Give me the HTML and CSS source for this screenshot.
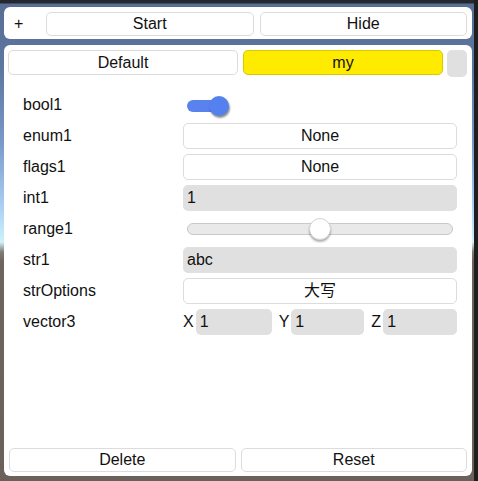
FILE: index.html
```html
<!DOCTYPE html>
<html>
<head>
<meta charset="utf-8">
<link rel="stylesheet" href="styles.css">
</head>
<body>
<div class="screen">
  <div class="topbar">
    <div class="plus">+</div>
    <div class="btn grow">Start</div>
    <div class="btn grow">Hide</div>
  </div>
  <div class="panel">
    <div class="tabs">
      <div class="btn tab-default">Default</div>
      <div class="btn tab-my">my</div>
      <div class="tab-extra"></div>
    </div>
    <div class="fields">
      <div class="label">bool1</div>
      <div class="ctrl"><div class="toggle"><div class="toggle-knob"></div></div></div>

      <div class="label">enum1</div>
      <div class="btn">None</div>

      <div class="label">flags1</div>
      <div class="btn">None</div>

      <div class="label">int1</div>
      <div class="input">1</div>

      <div class="label">range1</div>
      <div class="ctrl"><div class="slider"><div class="slider-knob"></div></div></div>

      <div class="label">str1</div>
      <div class="input">abc</div>

      <div class="label">strOptions</div>
      <div class="btn">大写</div>

      <div class="label">vector3</div>
      <div class="vector">
        <div class="axis"><span class="axis-name">X</span><div class="input">1</div></div>
        <div class="axis"><span class="axis-name">Y</span><div class="input">1</div></div>
        <div class="axis"><span class="axis-name">Z</span><div class="input">1</div></div>
      </div>
    </div>
    <div class="spacer"></div>
    <div class="bottom">
      <div class="btn grow">Delete</div>
      <div class="btn grow">Reset</div>
    </div>
  </div>
</div>
</body>
</html>
```

FILE: styles.css
```css
html, body {
  margin: 0;
  padding: 0;
}
body {
  width: 478px;
  height: 481px;
  overflow: hidden;
  font-family: "Liberation Sans", Arial, "Noto Sans CJK SC", sans-serif;
  font-size: 16px;
  color: #111;
  background:
    linear-gradient(to right, transparent 474px, #1f1f1f 474px),
    linear-gradient(to bottom,
      #25292f 0, #25292f 3px,
      #586e95 4px, #5d77a0 70px, #7898c8 140px, #a4caf0 200px,
      #c6ecfb 236px, #d2f2f8 242px, #7f7c76 252px, #6c645d 262px, #6a615a 100%);
}
.screen {
  box-sizing: border-box;
  width: 474px;
  height: 481px;
  padding: 7px 2px 5px 4px;
  display: flex;
  flex-direction: column;
  gap: 6px;
}
.topbar {
  background: #fff;
  border-radius: 6px;
  height: 32px;
  box-sizing: border-box;
  padding: 5px 5px 3px 5px;
  display: flex;
  gap: 6px;
}
.plus {
  width: 33px;
  padding-left: 5px;
  box-sizing: border-box;
  line-height: 24px;
  margin-right: -2px;
}
.btn {
  box-sizing: border-box;
  background: #fff;
  border: 1px solid #dcdcdc;
  border-radius: 5px;
  text-align: center;
  line-height: 22px;
  height: 24px;
  white-space: nowrap;
}
.grow { flex: 1; }
.panel {
  flex: 1;
  background: #fff;
  border-radius: 6px;
  display: flex;
  flex-direction: column;
  padding: 5px 5px 4px 4px;
  box-sizing: border-box;
}
.tabs {
  display: flex;
  gap: 5px;
  align-items: flex-start;
}
.tabs .btn {
  height: 25px;
  line-height: 23px;
}
.tab-default { width: 230px; }
.tab-my {
  flex: 1;
  background: #ffeb00;
  border-color: #d8c800;
}
.tab-extra {
  width: 20px;
  height: 27px;
  background: #e0e0e0;
  border-radius: 5px;
  margin-left: -1px;
}
.fields {
  display: grid;
  grid-template-columns: 160px 1fr;
  grid-auto-rows: 26px;
  row-gap: 5px;
  padding: 15px 10px 0 15px;
  align-items: center;
}
.fields .btn {
  height: 26px;
  line-height: 24px;
}
.label {
  line-height: 26px;
}
.input {
  box-sizing: border-box;
  background: #e0e0e0;
  border-radius: 5px;
  height: 26px;
  line-height: 26px;
  padding-left: 4px;
}
.ctrl {
  height: 26px;
  position: relative;
}
.toggle {
  position: absolute;
  left: 4px;
  top: 8px;
  width: 38px;
  height: 12px;
  border-radius: 6px;
  background: #5a82ef;
}
.toggle-knob {
  position: absolute;
  right: -4px;
  top: -4px;
  width: 20px;
  height: 20px;
  border-radius: 50%;
  background: #5580f0;
  box-shadow: 1px 2px 2px rgba(0, 0, 0, 0.45);
}
.slider {
  position: absolute;
  left: 4px;
  right: 4px;
  top: 7px;
  height: 12px;
  box-sizing: border-box;
  border: 1px solid #c9c9c9;
  border-radius: 6px;
  background: #e9e9e9;
}
.slider-knob {
  position: absolute;
  left: 121px;
  top: -6px;
  width: 22px;
  height: 22px;
  box-sizing: border-box;
  border-radius: 50%;
  background: #fff;
  border: 1px solid #d4d4d4;
  box-shadow: 0 2px 2px rgba(0, 0, 0, 0.3);
}
.vector {
  display: flex;
  gap: 4px;
}
.axis {
  flex: 1;
  display: flex;
  align-items: center;
  gap: 2px;
}
.axis .input { flex: 1; }
.axis-name {
  padding-left: 3px;
  line-height: 26px;
}
.axis:first-child .axis-name { padding-left: 0; }
.spacer { flex: 1; }
.bottom {
  display: flex;
  gap: 5px;
  padding-left: 1px;
}
.bottom .btn {
  height: 24px;
  line-height: 22px;
}
```
